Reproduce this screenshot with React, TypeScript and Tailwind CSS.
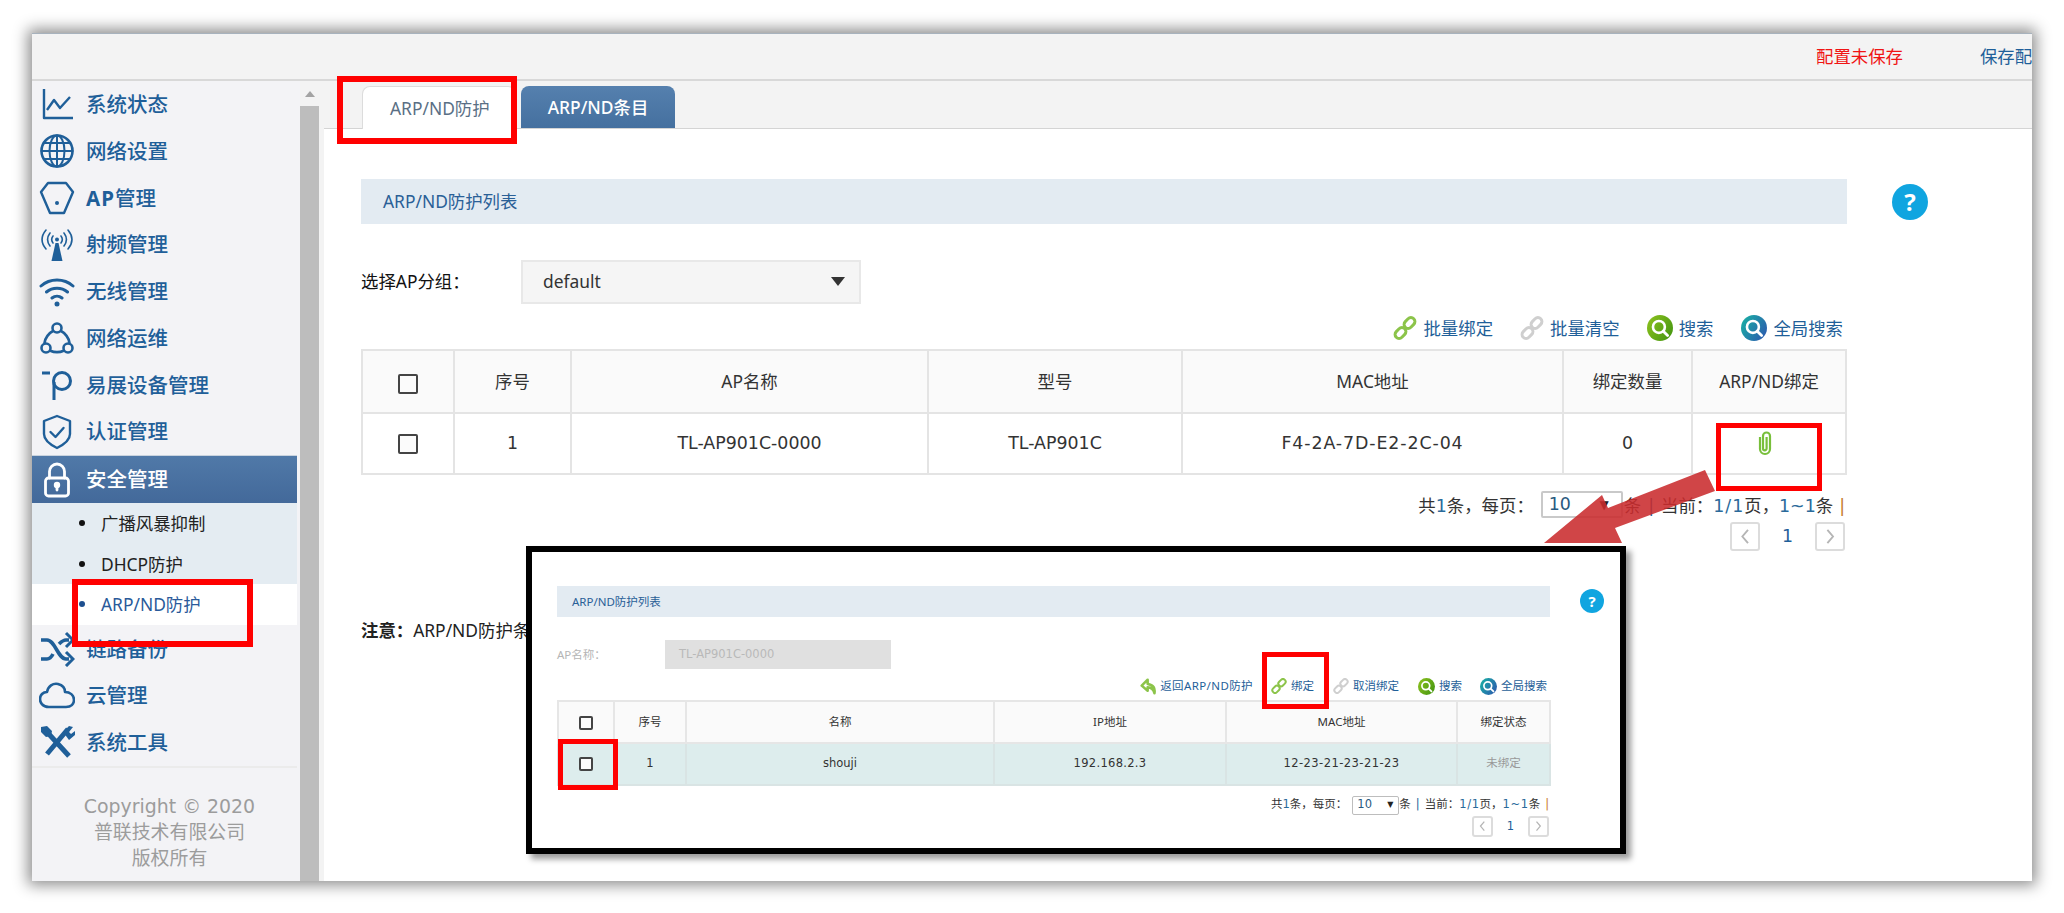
import React from "react";

const blue = "#1f5f99";
const wide = "font-['DejaVu_Sans','Noto_Sans_CJK_SC',sans-serif]";

function NavIcon({ name, color = blue }: { name: string; color?: string }) {
  const c = { fill: "none", stroke: color, strokeWidth: 2.4, strokeLinecap: "round" as const, strokeLinejoin: "round" as const };
  return (
    <svg viewBox="0 0 36 36" className="w-[36px] h-[36px] shrink-0">
      {name === "chart" && <path {...c} strokeLinecap="butt" d="M5 3v29h29M8 24l7-10 6 8 10-11" />}
      {name === "globe" && (
        <g {...c} strokeWidth={2}>
          <circle cx="18" cy="18" r="15.5" strokeWidth={2.6} />
          <ellipse cx="18" cy="18" rx="7.5" ry="15.5" />
          <path d="M18 2.5v31M2.5 18h31M5 10h26M5 26h26" />
        </g>
      )}
      {name === "ap" && (
        <g>
          <path {...c} d="M9 3h18l7 9-9 21H11L2 12z" />
          <circle cx="18" cy="23" r="2" fill={color} />
        </g>
      )}
      {name === "radio" && (
        <g>
          <path {...c} strokeWidth={1.6} d="M7 3C2 9 2 16 7 22M11 6c-3 4-3 9 0 13M29 3c5 6 5 13 0 19M25 6c3 4 3 9 0 13M14 9c-1.500 2-1.500 5 0 7M22 9c1.500 2 1.500 5 0 7" />
          <circle cx="18" cy="12.500" r="2" fill={color} />
          <path fill={color} d="M16.500 16h3l4 18h-11z" />
        </g>
      )}
      {name === "wifi" && (
        <g>
          <path {...c} strokeWidth={3} d="M2 13c9-8 23-8 32 0M7.500 19c6-5 15-5 21 0M13 25c3-2.500 7-2.500 10 0" />
          <circle cx="18" cy="31" r="2.500" fill={color} />
        </g>
      )}
      {name === "net" && (
        <g {...c} strokeWidth={2.6}>
          <circle cx="18" cy="8" r="4.500" />
          <circle cx="7" cy="28" r="4.500" />
          <circle cx="29" cy="28" r="4.500" />
          <path d="M14 11c-4 2-8 7-8.500 12M22 11c4 2 8 7 8.500 12M12 31c3 1.500 9 1.500 12 0" />
        </g>
      )}
      {name === "p" && (
        <g {...c} strokeWidth={3} strokeLinecap="butt">
          <path d="M3 6h8M15 33V15" />
          <circle cx="23" cy="14" r="8.500" />
        </g>
      )}
      {name === "shield" && <path {...c} d="M18 2l13 5v13c0 7-7 11-13 14C12 31 5 27 5 20V7zM11.500 18l5 5 8-9" />}
      {name === "lock" && (
        <g {...c} stroke="#fff" strokeWidth={2.8}>
          <rect x="6.500" y="16" width="23" height="18" rx="3" />
          <path d="M10.500 16V9.500a7.500 7.500 0 0 1 15 0V16" />
          <circle cx="18" cy="23" r="1.800" fill="#fff" />
          <path d="M18 24v4" />
        </g>
      )}
      {name === "shuffle" && (
        <g {...c} strokeWidth={3.6} strokeLinecap="butt" strokeLinejoin="miter">
          <path d="M2 9h6c8 0 11 19 19 19h3M2 28h6c3 0 5-3 6-5M20 13c2-2 4-4 7-4h3" />
          <path d="M27 2l7 7-7 7M27 21l7 7-7 7" strokeWidth={3} />
        </g>
      )}
      {name === "cloud" && <path {...c} strokeWidth={2.6} d="M10 29C3 29 1 24 1 21c0-4 3-7 7-7 1-6 6-9 11-8 4 1 7 4 7 8 5 0 9 3 9 8 0 4-3 7-8 7z" />}
      {name === "tools" && (
        <g>
          <path {...c} strokeWidth={5} strokeLinecap="butt" d="M8 8l22 24M29 5L8 30" />
          <path fill={color} d="M2 3l6-1 5 5-1 5-5 1-5-5zM24 8l6-6 4 1-4 5 2 2 4-3v4l-6 5z" />
        </g>
      )}
    </svg>
  );
}

function NavRow({ icon, label }: { icon: string; label: React.ReactNode }) {
  return (
    <div className="h-[46.75px] flex items-center pl-[7px] gap-[11px] text-[20.5px] font-medium text-[#1f5f99]">
      <NavIcon name={icon} />
      <span>{label}</span>
    </div>
  );
}

function SubRow({ label, active }: { label: string; active?: boolean }) {
  return (
    <div className={`h-[40.5px] flex items-center pl-[47px] gap-[16px] text-[17.4px] ${active ? "bg-white text-[#2a5a9a]" : "text-[#222]"}`}>
      <span className={`w-[6px] h-[6px] rounded-full ${active ? "bg-[#1d4f8f]" : "bg-[#111]"}`} />
      <span>{label}</span>
    </div>
  );
}

function Sidebar() {
  return (
    <aside className="w-[268px] shrink-0 bg-[#f3f3f6]">
      <div className="w-[265px]">
        <NavRow icon="chart" label="系统状态" />
        <NavRow icon="globe" label="网络设置" />
        <NavRow icon="ap" label={<><b className="tracking-[1px]">AP</b>管理</>} />
        <NavRow icon="radio" label="射频管理" />
        <NavRow icon="wifi" label="无线管理" />
        <NavRow icon="net" label="网络运维" />
        <NavRow icon="p" label="易展设备管理" />
        <NavRow icon="shield" label="认证管理" />
        <div className="h-[48px] flex items-center pl-[7px] gap-[11px] text-[20.5px] font-medium text-white bg-gradient-to-b from-[#5079a8] to-[#43699a] border-t border-[#c9d3de]">
          <NavIcon name="lock" />
          <span>安全管理</span>
        </div>
        <div className="bg-[#e4ecf2]">
          <SubRow label="广播风暴抑制" />
          <SubRow label="DHCP防护" />
          <SubRow label="ARP/ND防护" active />
        </div>
        <div className="pt-[1px] border-b-2 border-[#ebebeb]">
          <NavRow icon="shuffle" label="链路备份" />
          <NavRow icon="cloud" label="云管理" />
          <NavRow icon="tools" label="系统工具" />
        </div>
        <div className="pt-[25px] text-center text-[18.9px] leading-[26px] text-[#9c9c9c] pl-[10px]">
          <div className={wide}>Copyright © 2020</div>
          <div>普联技术有限公司</div>
          <div>版权所有</div>
        </div>
      </div>
    </aside>
  );
}

function Scrollbar() {
  return (
    <div className="w-[19px] shrink-0 flex flex-col items-center bg-[#f3f3f3]">
      <div className="h-[25px] flex items-center justify-center">
        <div className="w-0 h-0 border-l-[5px] border-r-[5px] border-b-[6px] border-l-transparent border-r-transparent border-b-[#a3a3a3]" />
      </div>
      <div className="w-full flex-1 bg-[#bdbdbd]" />
    </div>
  );
}

function ChainIcon({ color, size }: { color: string; size: string }) {
  return (
    <svg viewBox="0 0 24 24" className={`${size} shrink-0`} fill="none" stroke={color} strokeWidth="3">
      <rect x="1.500" y="13" width="12" height="8" rx="4" transform="rotate(-45 7.500 17)" />
      <rect x="10.500" y="3" width="12" height="8" rx="4" transform="rotate(-45 16.500 7)" />
    </svg>
  );
}

function SearchIcon({ id, from, to, size }: { id: string; from: string; to: string; size: string }) {
  return (
    <svg viewBox="0 0 24 24" className={`${size} shrink-0`}>
      <defs>
        <linearGradient id={id} x1="0" y1="0" x2="1" y2="0.6">
          <stop offset="0" stopColor={from} />
          <stop offset="1" stopColor={to} />
        </linearGradient>
      </defs>
      <circle cx="12" cy="12" r="12" fill={`url(#${id})`} />
      <circle cx="11" cy="11" r="5.500" fill="none" stroke="#fff" strokeWidth="2.400" />
      <path d="M15 15l4 4" stroke="#fff" strokeWidth="2.600" strokeLinecap="round" />
    </svg>
  );
}

function BackIcon() {
  return (
    <svg viewBox="0 0 20 20" className="w-[17px] h-[17px] shrink-0" fill="none" stroke="#8cc44a" strokeWidth="3" strokeLinejoin="round">
      <path d="M9 2L2 9l7 6V11c4 0 7 2 8 7 1-6-1-10-8-11z" />
    </svg>
  );
}

function Clip() {
  return (
    <svg viewBox="0 0 18 26" className="w-[18px] h-[26px]" fill="none" stroke="#78bf3b" strokeWidth="2.200">
      <path d="M4 7v12a5 5 0 0 0 10 0V6a3.500 3.500 0 0 0-7 0v12.500a1.800 1.800 0 0 0 3.600 0V7" />
    </svg>
  );
}

function Help({ size }: { size: string }) {
  return (
    <div className={`${size} rounded-full bg-[#10a5e0] text-white font-bold flex items-center justify-center`}>?</div>
  );
}

function Checkbox({ size }: { size: string }) {
  return <span className={`${size} inline-block rounded-[2px] border-2 border-[#444] bg-[#fbfbfb] align-middle`} />;
}

function PageBtn({ dir, size }: { dir: "l" | "r"; size: string }) {
  return (
    <div className={`${size} rounded-[3px] border-2 border-[#dcdcdc] flex items-center justify-center`}>
      <svg viewBox="0 0 10 16" className="w-[40%] h-[60%]" fill="none" stroke="#b5b5b5" strokeWidth="2">
        <path d={dir === "l" ? "M8 1L2 8l6 7" : "M2 1l6 7-6 7"} />
      </svg>
    </div>
  );
}

function MainTable() {
  const th = "border-2 border-[#e4e4e4] font-normal text-[#333]";
  const td = `border-2 border-[#e4e4e4] text-[#333] ${wide}`;
  return (
    <table className="w-[1484px] table-fixed border-collapse text-[17.4px] text-center">
      <colgroup>
        <col className="w-[92px]" />
        <col className="w-[117px]" />
        <col className="w-[357px]" />
        <col className="w-[254px]" />
        <col className="w-[381px]" />
        <col className="w-[129px]" />
        <col className="w-[154px]" />
      </colgroup>
      <thead>
        <tr className="h-[63px] bg-[#fafafa]">
          <th className={th}><Checkbox size="w-[20px] h-[20px]" /></th>
          <th className={th}>序号</th>
          <th className={th}>AP名称</th>
          <th className={th}>型号</th>
          <th className={th}>MAC地址</th>
          <th className={th}>绑定数量</th>
          <th className={th}>ARP/ND绑定</th>
        </tr>
      </thead>
      <tbody>
        <tr className="h-[61px]">
          <td className={td}><Checkbox size="w-[20px] h-[20px]" /></td>
          <td className={`${td} text-[#1f5f99]`}>1</td>
          <td className={td}>TL-AP901C-0000</td>
          <td className={td}>TL-AP901C</td>
          <td className={`${td} tracking-[0.9px]`}>F4-2A-7D-E2-2C-04</td>
          <td className={td}>0</td>
          <td className={td}><div className="flex justify-center pb-[2px] pr-[8px]"><Clip /></div></td>
        </tr>
      </tbody>
    </table>
  );
}

function Toolbar() {
  return (
    <div className="mt-[12px] mb-[9px] h-[24px] flex items-center justify-end pr-[4px] text-[17.4px] text-[#1f5f99]">
      <ChainIcon color="#8cc44a" size="w-[24px] h-[24px]" />
      <span className="ml-[6px]">批量绑定</span>
      <div className="ml-[27px]"><ChainIcon color="#cfcfcf" size="w-[24px] h-[24px]" /></div>
      <span className="ml-[6px]">批量清空</span>
      <div className="ml-[27px]"><SearchIcon id="s1" from="#8fc31f" to="#4c9a12" size="w-[26px] h-[26px]" /></div>
      <span className="ml-[6px]">搜索</span>
      <div className="ml-[28px]"><SearchIcon id="s2" from="#17b5a3" to="#2b62ae" size="w-[26px] h-[26px]" /></div>
      <span className="ml-[6px]">全局搜索</span>
    </div>
  );
}

function Pager() {
  return (
    <div className={`mt-[16px] pr-[2px] flex flex-col items-end text-[17.4px] text-[#333] ${wide}`}>
      <div className="h-[27px] flex items-center">
        <span className="pt-[3px]">共<span className="text-[#2a6a9a]">1</span>条，每页：</span>
        <div className="ml-[7px] w-[82px] h-[27px] rounded-[2px] border-2 border-[#c9c9c9] flex items-center justify-between pl-[6px] pr-[12px]">
          <span className="text-[#2a5a80]">10</span>
          <span className="text-[12px] text-[#222]">▼</span>
        </div>
        <span className="ml-[1px] pt-[3px]">条</span>
        <span className="mx-[7px] pt-[3px] text-[#1f5f99]">|</span>
        <span className="pt-[3px]">当前：<span className="text-[#2a6a9a] tracking-[1px]">1/1</span>页，<span className="text-[#2a6a9a]">1~1</span>条</span>
        <span className="ml-[6px] pt-[3px] text-[#c77a30]">|</span>
      </div>
      <div className="mt-[4px] h-[29px] flex items-center">
        <PageBtn dir="l" size="w-[30px] h-[29px]" />
        <span className="mx-[22px] text-[#1f5f99]">1</span>
        <PageBtn dir="r" size="w-[30px] h-[29px]" />
      </div>
    </div>
  );
}

function Main() {
  return (
    <div className="flex-1 min-w-0 overflow-hidden bg-white">
      <div className="h-[48px] bg-[#f3f3f3] border-b border-[#d4d4d4] flex items-end pl-[38px]">
        <div className="relative top-px w-[154px] h-[43px] bg-white border border-b-0 border-[#dcdcdc] rounded-t-[8px] flex items-center pl-[27px] text-[17.4px] text-[#5a6f85]">
          ARP/ND防护
        </div>
        <div className="ml-[5px] w-[154px] h-[42px] rounded-t-[8px] bg-gradient-to-b from-[#5580ae] to-[#45709f] flex items-center justify-center text-[17.4px] font-medium text-white">
          ARP/ND条目
        </div>
      </div>
      <div className="pl-[37px] w-[1523px]">
        <div className="mt-[50px] h-[45px] bg-[#e3ebf2] flex items-center pl-[22px] text-[17.4px] text-[#2a6097]">ARP/ND防护列表</div>
        <div className="mt-[36px] flex items-center text-[17.4px] leading-[22px] text-[#111]">
          <span className="w-[160px] -mt-[2px]">选择AP分组：</span>
          <div className="w-[340px] h-[44px] bg-[#f5f5f5] border-2 border-[#e8e8e8] flex items-center justify-between pl-[20px] pr-[14px] pb-[2px] text-[#333]">
            <span>default</span>
            <span className="w-0 h-0 border-l-[7px] border-r-[7px] border-t-[9px] border-l-transparent border-r-transparent border-t-[#333]" />
          </div>
        </div>
        <Toolbar />
        <MainTable />
        <Pager />
        <p className="mt-[66px] text-[17.4px] text-[#222] whitespace-nowrap">
          <b>注意：</b>ARP/ND防护条目绑定后生效
        </p>
      </div>
    </div>
  );
}

function Inset() {
  const th = "border-2 border-[#e6e6e6] font-normal text-[#333]";
  const td = `border-2 border-[#d9e4e4] text-[#333] ${wide}`;
  return (
    <div className="absolute left-[526px] top-[546px] w-[1100px] h-[308px] border-[6px] border-black bg-white shadow-[5px_5px_6px_rgba(0,0,0,0.4)] pl-[25px] pt-[34px]">
      <div className="relative">
        <div className="w-[993px] h-[31px] bg-[#e3ebf2] flex items-center pl-[15px] text-[11.500px] text-[#2a6097]">ARP/ND防护列表</div>
        <div className="absolute left-[1023px] top-[3px]"><Help size="w-[24px] h-[24px] text-[15px]" /></div>
      </div>
      <div className="mt-[23px] flex items-center text-[11.500px]">
        <span className="w-[108px] text-[#b5b5b5]">AP名称：</span>
        <div className={`w-[226px] h-[29px] bg-[#e0e0e0] flex items-center pl-[14px] text-[#b9b9b9] ${wide}`}>TL-AP901C-0000</div>
      </div>
      <div className="w-[993px] mt-[7px] mb-[4px] h-[20px] flex items-center justify-end pr-[3px] text-[11.500px] text-[#1f5f99]">
        <BackIcon />
        <span className="ml-[3px] tracking-[0.4px]">返回ARP/ND防护</span>
        <div className="ml-[18px]"><ChainIcon color="#8cc44a" size="w-[16px] h-[16px]" /></div>
        <span className="ml-[4px]">绑定</span>
        <div className="ml-[19px]"><ChainIcon color="#cfcfcf" size="w-[16px] h-[16px]" /></div>
        <span className="ml-[4px]">取消绑定</span>
        <div className="ml-[19px]"><SearchIcon id="s3" from="#8fc31f" to="#4c9a12" size="w-[17px] h-[17px]" /></div>
        <span className="ml-[4px]">搜索</span>
        <div className="ml-[18px]"><SearchIcon id="s4" from="#17b5a3" to="#2b62ae" size="w-[17px] h-[17px]" /></div>
        <span className="ml-[4px]">全局搜索</span>
      </div>
      <table className="w-[992px] table-fixed border-collapse text-[11.500px] text-center">
        <colgroup>
          <col className="w-[56px]" />
          <col className="w-[72px]" />
          <col className="w-[308px]" />
          <col className="w-[232px]" />
          <col className="w-[231px]" />
          <col className="w-[93px]" />
        </colgroup>
        <thead>
          <tr className="h-[42px] bg-[#fafafa]">
            <th className={th}><Checkbox size="w-[14px] h-[14px]" /></th>
            <th className={th}>序号</th>
            <th className={th}>名称</th>
            <th className={th}>IP地址</th>
            <th className={th}>MAC地址</th>
            <th className={th}>绑定状态</th>
          </tr>
        </thead>
        <tbody>
          <tr className="h-[42px] bg-[#ddeded]">
            <td className={td}><Checkbox size="w-[14px] h-[14px]" /></td>
            <td className={td}>1</td>
            <td className={td}>shouji</td>
            <td className={`${td} tracking-[0.3px]`}>192.168.2.3</td>
            <td className={`${td} tracking-[0.45px]`}>12-23-21-23-21-23</td>
            <td className={`${td} text-[#999]`}>未绑定</td>
          </tr>
        </tbody>
      </table>
      <div className={`w-[993px] mt-[10px] pr-[1px] flex flex-col items-end text-[11.500px] text-[#333] ${wide}`}>
        <div className="h-[18px] flex items-center">
          <span>共<span className="text-[#2a6a9a]">1</span>条，每页：</span>
          <div className="ml-[5px] w-[47px] h-[19px] rounded-[2px] border border-[#bdbdbd] flex items-center justify-between pl-[4px] pr-[5px]">
            <span className="text-[#2a5a80]">10</span>
            <span className="text-[8px] text-[#222]">▼</span>
          </div>
          <span>条</span>
          <span className="mx-[5px] text-[#1f5f99]">|</span>
          <span>当前：<span className="text-[#2a6a9a] tracking-[0.6px]">1/1</span>页，<span className="text-[#2a6a9a] tracking-[0.6px]">1~1</span>条</span>
          <span className="ml-[5px] text-[#c77a30]">|</span>
        </div>
        <div className="mt-[2px] h-[21px] flex items-center">
          <PageBtn dir="l" size="w-[21px] h-[21px]" />
          <span className="mx-[14px] text-[#1f5f99]">1</span>
          <PageBtn dir="r" size="w-[21px] h-[21px]" />
        </div>
      </div>
    </div>
  );
}

export default function App() {
  return (
    <div className="relative w-[2064px] h-[913px] overflow-hidden bg-white font-['Noto_Sans','Noto_Sans_CJK_SC',sans-serif]">
      <div className="pt-[33px] pl-[32px]">
        <div className="w-[2000px] h-[848px] flex flex-col overflow-hidden bg-white border-t border-[#a7b2bd] shadow-[0_0_14px_4px_rgba(0,0,0,0.45)]">
          <header className="h-[47px] shrink-0 bg-[#f3f3f3] border-b-2 border-[#d8d8d8] flex items-center pl-[1784px] text-[17.4px] whitespace-nowrap">
            <span className="text-[#f01414]">配置未保存</span>
            <span className="ml-[77px] text-[#1f5f99]">保存配置</span>
          </header>
          <div className="flex-1 min-h-0 flex">
            <Sidebar />
            <Scrollbar />
            <div className="w-[5px] shrink-0 bg-[#f3f3f3]" />
            <Main />
          </div>
        </div>
      </div>

      <div className="absolute left-[1910px] top-[184px] -translate-x-1/2">
        <Help size="w-[36px] h-[36px] text-[24px]" />
      </div>

      {/* annotations drawn on top of the screenshot */}
      <svg viewBox="0 0 180 85" className="absolute left-[1540px] top-[465px] w-[180px] h-[85px]">
        <path d="M165 5l10 21-100 37 7 15H4l58-48 6 13z" fill="#c92b2d" fillOpacity="0.88" />
      </svg>
      <Inset />
      <div className="absolute left-[337px] top-[76px] w-[180px] h-[68px] border-[6px] border-[#ff0000]" />
      <div className="absolute left-[72px] top-[579px] w-[181px] h-[68px] border-[6px] border-[#ff0000]" />
      <div className="absolute left-[1716px] top-[423px] w-[106px] h-[68px] border-[5px] border-[#ff0000]" />
      <div className="absolute left-[1262px] top-[652px] w-[67px] h-[57px] border-[5px] border-[#ff0000]" />
      <div className="absolute left-[558px] top-[739px] w-[60px] h-[51px] border-[5px] border-[#ff0000]" />
    </div>
  );
}
